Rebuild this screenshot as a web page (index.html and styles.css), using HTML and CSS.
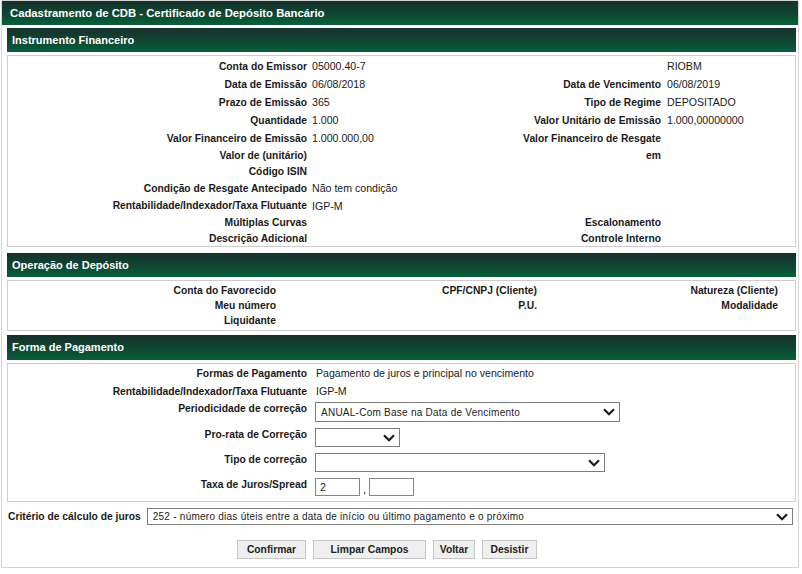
FILE: index.html
```html
<!DOCTYPE html>
<html lang="pt-BR">
<head>
<meta charset="utf-8">
<title>Cadastramento de CDB</title>
<link rel="stylesheet" href="styles.css">
</head>
<body>
<div class="page">
  <div class="titlebar">Cadastramento de CDB - Certificado de Depósito Bancário</div>
  <div class="content">
    <div class="sec-head">Instrumento Financeiro</div>
    <div class="box info">
      <div class="row tall"><span class="lbl">Conta do Emissor</span><span class="val">05000.40-7</span><span class="lbl"></span><span class="val val-r">RIOBM</span></div>
      <div class="row tall"><span class="lbl">Data de Emissão</span><span class="val">06/08/2018</span><span class="lbl">Data de Vencimento</span><span class="val val-r">06/08/2019</span></div>
      <div class="row tall"><span class="lbl">Prazo de Emissão</span><span class="val">365</span><span class="lbl">Tipo de Regime</span><span class="val val-r">DEPOSITADO</span></div>
      <div class="row tall"><span class="lbl">Quantidade</span><span class="val">1.000</span><span class="lbl">Valor Unitário de Emissão</span><span class="val val-r">1.000,00000000</span></div>
      <div class="row tall"><span class="lbl">Valor Financeiro de Emissão</span><span class="val">1.000.000,00</span><span class="lbl">Valor Financeiro de Resgate</span><span class="val val-r"></span></div>
      <div class="row short"><span class="lbl">Valor de (unitário)</span><span class="val"></span><span class="lbl">em</span><span class="val val-r"></span></div>
      <div class="row short"><span class="lbl">Código ISIN</span><span class="val"></span><span class="lbl"></span><span class="val val-r"></span></div>
      <div class="row tall"><span class="lbl">Condição de Resgate Antecipado</span><span class="val">Não tem condição</span><span class="lbl"></span><span class="val val-r"></span></div>
      <div class="row mid"><span class="lbl">Rentabilidade/Indexador/Taxa Flutuante</span><span class="val">IGP-M</span><span class="lbl"></span><span class="val val-r"></span></div>
      <div class="row short"><span class="lbl">Múltiplas Curvas</span><span class="val"></span><span class="lbl">Escalonamento</span><span class="val val-r"></span></div>
      <div class="row short"><span class="lbl">Descrição Adicional</span><span class="val"></span><span class="lbl">Controle Interno</span><span class="val val-r"></span></div>
    </div>

    <div class="sec-head gap">Operação de Depósito</div>
    <div class="box oper">
      <div class="orow"><span class="lbl">Conta do Favorecido</span><span></span><span class="lbl">CPF/CNPJ (Cliente)</span><span></span><span class="lbl">Natureza (Cliente)</span><span></span></div>
      <div class="orow"><span class="lbl">Meu número</span><span></span><span class="lbl">P.U.</span><span></span><span class="lbl">Modalidade</span><span></span></div>
      <div class="orow"><span class="lbl">Liquidante</span><span></span><span class="lbl"></span><span></span><span class="lbl"></span><span></span></div>
    </div>

    <div class="sec-head gap2">Forma de Pagamento</div>
    <div class="box forma">
      <div class="frow r-text"><span class="lbl">Formas de Pagamento</span><span class="val">Pagamento de juros e principal no vencimento</span></div>
      <div class="frow r-text"><span class="lbl">Rentabilidade/Indexador/Taxa Flutuante</span><span class="val">IGP-M</span></div>
      <div class="frow r-ctl r-first"><span class="lbl">Periodicidade de correção</span><span class="ctl"><span class="select sel-period"><span class="sel-text">ANUAL-Com Base na Data de Vencimento</span><svg class="chev" width="12" height="8" viewBox="0 0 12 8"><path d="M1 1.2 L6 6.2 L11 1.2" fill="none" stroke="#1c1c1c" stroke-width="2.2"/></svg></span></span></div>
      <div class="frow r-ctl r-pro"><span class="lbl">Pro-rata de Correção</span><span class="ctl"><span class="select sel-pro"><span class="sel-text"></span><svg class="chev" width="12" height="8" viewBox="0 0 12 8"><path d="M1 1.2 L6 6.2 L11 1.2" fill="none" stroke="#1c1c1c" stroke-width="2.2"/></svg></span></span></div>
      <div class="frow r-ctl"><span class="lbl">Tipo de correção</span><span class="ctl"><span class="select sel-tipo"><span class="sel-text"></span><svg class="chev" width="12" height="8" viewBox="0 0 12 8"><path d="M1 1.2 L6 6.2 L11 1.2" fill="none" stroke="#1c1c1c" stroke-width="2.2"/></svg></span></span></div>
      <div class="frow r-ctl r-last"><span class="lbl">Taxa de Juros/Spread</span><span class="ctl taxa"><span class="input">2</span><span class="comma">,</span><span class="input"></span></span></div>
    </div>

    <div class="criterio">
      <span class="lbl">Critério de cálculo de juros</span>
      <span class="select sel-crit"><span class="sel-text">252 - número dias úteis entre a data de início ou último pagamento e o próximo</span><svg class="chev" width="12" height="8" viewBox="0 0 12 8"><path d="M1 1.2 L6 6.2 L11 1.2" fill="none" stroke="#1c1c1c" stroke-width="2.2"/></svg></span>
    </div>

    <div class="actions">
      <button class="btn btn-confirm">Confirmar</button>
      <button class="btn btn-limpar">Limpar Campos</button>
      <button class="btn btn-voltar">Voltar</button>
      <button class="btn btn-desistir">Desistir</button>
    </div>
  </div>
</div>
</body>
</html>
```

FILE: styles.css
```css
* { box-sizing: border-box; }

html, body {
  margin: 0;
  padding: 0;
  background: #ffffff;
}

body {
  font-family: "Liberation Sans", Arial, sans-serif;
  color: #1a1a1a;
}

.page {
  margin-left: 1px;
  width: 798px;
  border: 1px solid #d4d4d4;
}

.titlebar {
  height: 24px;
  line-height: 24px;
  padding-left: 8px;
  color: #ffffff;
  font-weight: bold;
  font-size: 11.3px;
  background: linear-gradient(to bottom, #17302b 0%, #0f4632 55%, #07603a 100%);
}

.content {
  padding: 0 2px 8px 5px;
}

.sec-head {
  margin-top: 3px;
  height: 24px;
  line-height: 24px;
  padding-left: 5px;
  color: #ffffff;
  font-weight: bold;
  font-size: 11px;
  background: linear-gradient(to bottom, #17302b 0%, #0f4632 55%, #07603a 100%);
}

.sec-head.gap { margin-top: 6px; }
.sec-head.gap2 { margin-top: 4px; height: 25px; line-height: 25px; }

.box {
  margin-top: 3px;
  border: 1px solid #cdcdcd;
}

.lbl {
  font-weight: bold;
  font-size: 10.3px;
  text-align: right;
  white-space: nowrap;
  padding-right: 3px;
}

.val {
  font-size: 10.6px;
  white-space: nowrap;
  padding-left: 2px;
}

.val-r { padding-left: 3px; }

/* Instrumento Financeiro */
.info { padding-top: 1px; }

.row {
  display: grid;
  grid-template-columns: 302px 180px 174px 1fr;
  align-items: center;
}

.row.tall { height: 18px; }
.row.mid { height: 17px; }
.row.short { height: 16px; }

/* Operação de Depósito */
.oper { padding: 2px 0; }

.orow {
  display: grid;
  grid-template-columns: 271px 30px 231px 30px 211px 1fr;
  align-items: center;
  height: 15px;
}

/* Forma de Pagamento */
.frow {
  display: grid;
  grid-template-columns: 302px 1fr;
}

.frow .val { padding-left: 6px; }

.r-text { height: 18px; align-items: center; }

.r-ctl { height: 25px; align-items: start; }
.r-ctl.r-first { height: 26px; }
.r-ctl.r-last { height: 25px; }

.r-ctl .lbl {
  line-height: 16px;
  padding-top: 1px;
}

.ctl {
  padding-left: 5px;
  padding-top: 2px;
  display: flex;
  align-items: center;
}

.select {
  display: flex;
  align-items: center;
  justify-content: space-between;
  border: 1px solid #7d7d7d;
  background: #ffffff;
  padding: 0 4px 0 5px;
  font-size: 10px;
  letter-spacing: 0.25px;
  color: #222222;
  white-space: nowrap;
}

.chev { flex: none; }

.sel-period { width: 305px; height: 20px; }
.sel-pro { width: 85px; height: 19px; }
.sel-tipo { width: 290px; height: 19px; }

.input {
  width: 45px;
  height: 18px;
  border: 1px solid #858585;
  padding-left: 4px;
  font-size: 10.6px;
  line-height: 16px;
}

.comma {
  width: 9px;
  text-align: center;
  font-size: 10.6px;
  padding-top: 4px;
}

/* Critério */
.criterio {
  margin-top: 6px;
  display: flex;
  align-items: center;
  gap: 6px;
  padding-left: 1px;
  padding-right: 3px;
}

.criterio .lbl { padding-right: 0; }

.sel-crit {
  flex: 1;
  height: 17px;
}

/* Buttons */
.actions {
  margin-top: 15px;
  display: flex;
  gap: 7px;
  padding-left: 230px;
}

.btn {
  height: 19px;
  padding: 0;
  border: 1px solid #c6c6c6;
  background: #efefef;
  font-family: "Liberation Sans", Arial, sans-serif;
  font-weight: bold;
  font-size: 10.3px;
  color: #222222;
  text-align: center;
}

.btn-confirm { width: 69px; }
.btn-limpar { width: 113px; }
.btn-voltar { width: 42px; }
.btn-desistir { width: 55px; }
```
